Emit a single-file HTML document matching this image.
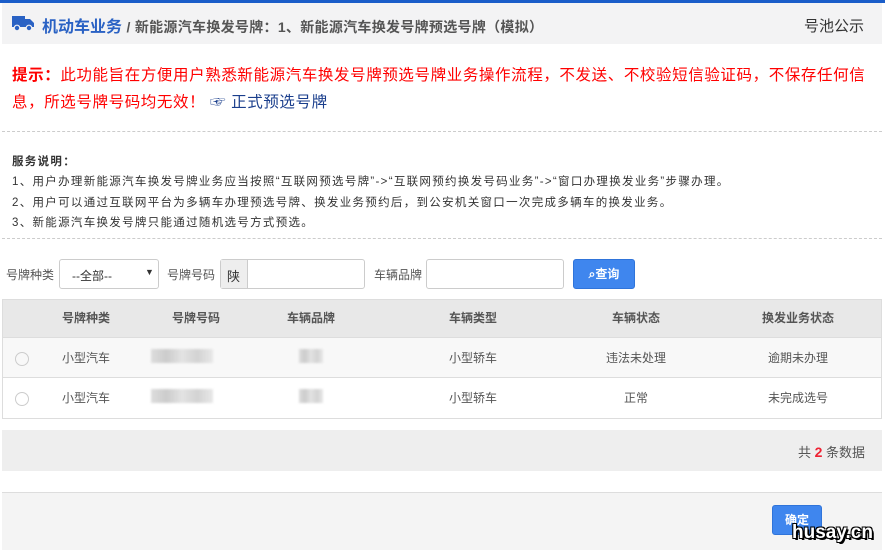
<!DOCTYPE html><html><head><meta charset="utf-8"><style>
*{margin:0;padding:0;box-sizing:border-box}
body{width:885px;height:550px;background:#fff;font-family:"Liberation Sans","Noto Sans CJK SC",sans-serif;position:relative;overflow:hidden;color:#333}
.a{position:absolute;white-space:nowrap}
.inp{position:absolute;border:1px solid #ccc;border-radius:3px;background:#fff;height:30px}
table{position:absolute;left:2px;top:299px;width:880px;border-collapse:collapse;font-size:12px;color:#555;table-layout:fixed}
td{text-align:center;border-bottom:1px solid #ddd}
.blur{display:inline-block;height:14px;background:linear-gradient(90deg,#ddd,#ccc,#e3e3e3,#d3d3d3,#e8e8e8);filter:blur(1px)}
.rad{display:inline-block;width:14px;height:14px;border:1px solid #ccc;border-radius:50%;margin-top:6px}
</style></head><body>
<div class="a" style="left:0;top:0;width:885px;height:3px;background:#1a5dc9"></div>
<div class="a" style="left:2px;top:3px;width:880px;height:41px;background:#f3f3f4"></div>
<svg class="a" style="left:12px;top:15px" width="22" height="17" viewBox="0 0 22 17"><rect x="0" y="1" width="13" height="11" fill="#2a62c4"/><path d="M13 4h5l4 4v4h-9z" fill="#2a62c4"/><circle cx="5" cy="13" r="2.8" fill="#2a62c4" stroke="#f3f3f4" stroke-width="1.2"/><circle cx="17" cy="13" r="2.8" fill="#2a62c4" stroke="#f3f3f4" stroke-width="1.2"/></svg>
<div class="a" style="left:42px;top:13px;font-size:16px;color:#2a62c4;font-weight:bold">机动车业务 <span style="font-size:14px;color:#555;letter-spacing:0.3px">/ 新能源汽车换发号牌：1、新能源汽车换发号牌预选号牌（模拟）</span></div>
<div class="a" style="left:804px;top:15px;font-size:15px;color:#333">号池公示</div>
<div class="a" style="left:12px;top:62px;font-size:15.5px;color:#f00;line-height:27px;letter-spacing:0.6px"><b>提示：</b>此功能旨在方便用户熟悉新能源汽车换发号牌预选号牌业务操作流程，不发送、不校验短信验证码，不保存任何信<br>息，所选号牌号码均无效！ <span style="color:#1a3e8c">☞ 正式预选号牌</span></div>
<div class="a" style="left:2px;top:131px;width:880px;border-top:1px dashed #ccc"></div>
<div class="a" style="left:12px;top:152px;font-size:11.5px;line-height:20.3px;color:#333;letter-spacing:1.3px"><b>服务说明：</b><br>1、用户办理新能源汽车换发号牌业务应当按照“互联网预选号牌”->“互联网预约换发号码业务”->“窗口办理换发业务”步骤办理。<br>2、用户可以通过互联网平台为多辆车办理预选号牌、换发业务预约后，到公安机关窗口一次完成多辆车的换发业务。<br>3、新能源汽车换发号牌只能通过随机选号方式预选。</div>
<div class="a" style="left:2px;top:238px;width:880px;border-top:1px dashed #ccc"></div>
<div class="a" style="left:6px;top:266px;font-size:12px;color:#555">号牌种类</div>
<div class="inp" style="left:59px;top:259px;width:100px"><span class="a" style="left:12px;top:7px;font-size:12px">--全部--</span><span class="a" style="left:85px;top:7px;font-size:9px">▼</span></div>
<div class="a" style="left:167px;top:266px;font-size:12px;color:#555">号牌号码</div>
<div class="inp" style="left:220px;top:259px;width:145px"><div class="a" style="left:0;top:0;width:27px;height:28px;background:#eee;border-right:1px solid #ccc;font-size:13px;padding:6px 0 0 6px">陕</div></div>
<div class="a" style="left:374px;top:266px;font-size:12px;color:#555">车辆品牌</div>
<div class="inp" style="left:426px;top:259px;width:138px"></div>
<div class="a" style="left:573px;top:259px;width:62px;height:30px;background:#3f86ee;border:1px solid #2f74da;border-radius:3px;color:#fff;font-size:12px;font-weight:bold;text-align:center;line-height:28px">⌕查询</div>
<table>
<colgroup><col style="width:40px"><col style="width:88px"><col style="width:132px"><col style="width:98px"><col style="width:226px"><col style="width:100px"><col style="width:196px"></colgroup>
<tr style="background:#e8e8e8;height:38px;font-weight:bold;color:#555"><td></td><td>号牌种类</td><td>号牌号码</td><td>车辆品牌</td><td>车辆类型</td><td>车辆状态</td><td style="padding-left:28px">换发业务状态</td></tr>
<tr style="background:#f8f8f8;height:40px"><td><span class="rad"></span></td><td>小型汽车</td><td style="text-align:left;padding-left:21px"><span class="blur" style="width:62px"></span></td><td><span class="blur" style="width:24px"></span></td><td>小型轿车</td><td>违法未处理</td><td style="padding-left:28px">逾期未办理</td></tr>
<tr style="height:41px"><td><span class="rad"></span></td><td>小型汽车</td><td style="text-align:left;padding-left:21px"><span class="blur" style="width:62px"></span></td><td><span class="blur" style="width:24px"></span></td><td>小型轿车</td><td>正常</td><td style="padding-left:28px">未完成选号</td></tr>
</table>
<div class="a" style="left:2px;top:299px;width:880px;height:120px;border:1px solid #ddd;pointer-events:none"></div>
<div class="a" style="left:2px;top:430px;width:880px;height:41px;background:#eee"></div>
<div class="a" style="left:798px;top:442px;font-size:13px;color:#555">共 <b style="color:#e23;font-size:14px">2</b> 条数据</div>
<div class="a" style="left:2px;top:492px;width:880px;height:58px;background:#f4f4f4;border-top:1px solid #ddd"></div>
<div class="a" style="left:772px;top:505px;width:50px;height:30px;background:#3f86ee;border:1px solid #2f74da;border-radius:3px;color:#fff;font-size:12px;font-weight:bold;text-align:center;line-height:28px">确定</div>
<div class="a" style="left:792px;top:522px;font-size:19px;font-weight:bold;color:#fff;text-shadow:-1px -1px 0 #000,1px -1px 0 #000,-1px 1px 0 #000,1px 1px 0 #000,2px 2px 0 #000">husay.cn</div>
</body></html>
